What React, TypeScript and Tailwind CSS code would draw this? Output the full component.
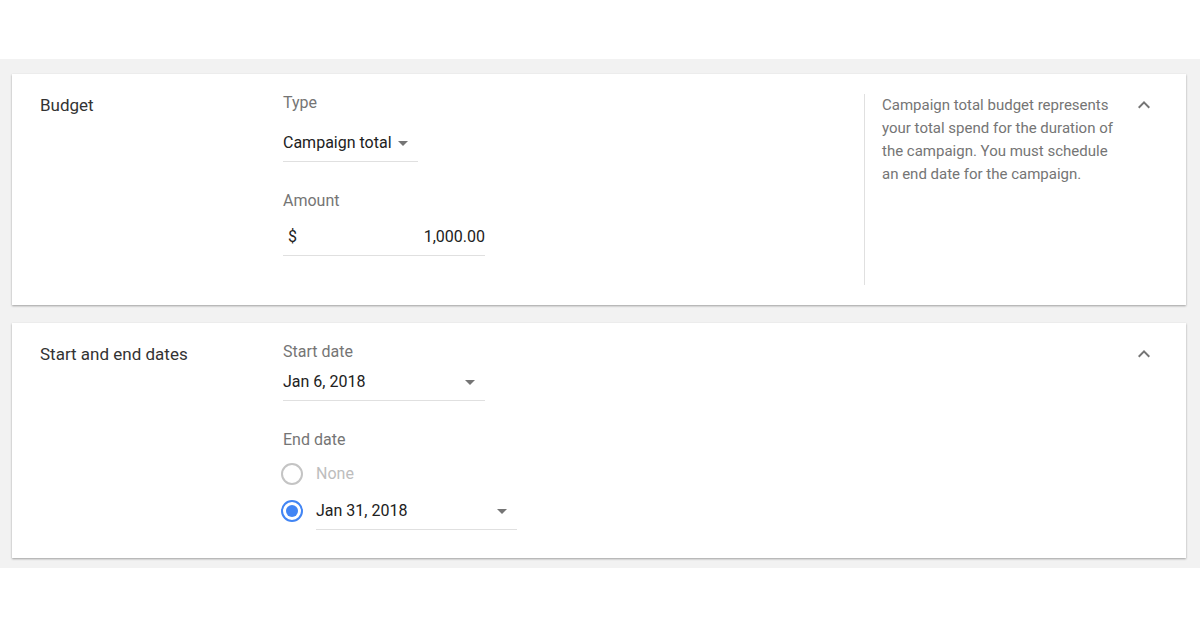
import React from "react";

function ChevronUp() {
  return (
    <svg width="24" height="24" viewBox="0 0 24 24" className="fill-[#757575]">
      <path d="M12 8l-6 6 1.41 1.41L12 10.83l4.59 4.58L18 14z" />
    </svg>
  );
}

function ArrowDrop() {
  return (
    <svg width="24" height="24" viewBox="0 0 24 24" className="fill-[#757575] shrink-0">
      <path d="M7 10l5 5 5-5z" />
    </svg>
  );
}

function Label({ children, className = "" }: { children: React.ReactNode; className?: string }) {
  return <div className={`text-[16px] leading-[18px] text-[#757575] ${className}`}>{children}</div>;
}

function Radio({ checked }: { checked?: boolean }) {
  return checked ? (
    <span className="-ml-[2px] flex h-[22px] w-[22px] items-center justify-center rounded-full border-2 border-[#4285f4]">
      <span className="h-[12px] w-[12px] rounded-full bg-[#4285f4]" />
    </span>
  ) : (
    <span className="-ml-[2px] h-[22px] w-[22px] rounded-full border-2 border-[#c4c4c4]" />
  );
}

export default function App() {
  return (
    <div className="min-h-[628px] bg-white font-['Roboto',sans-serif] text-[#212121]">
      <div className="h-[59px]" />
      <div className="flex flex-col gap-[18px] bg-[#f2f2f2] pb-[10px] pl-3 pr-[14px] pt-[15px]">
        {/* Budget */}
        <section className="flex h-[231px] bg-white py-5 pl-7 shadow-[0_1px_2px_rgba(0,0,0,0.35)]">
          <div className="w-[243px] shrink-0 text-[17px] leading-[22px] text-[#333]">Budget</div>
          <div className="flex-1">
            <Label>Type</Label>
            <div className="mt-3 flex h-[38px] w-[135px] items-center border-b border-[#e0e0e0] text-[16px]">
              <span>Campaign total</span>
              <span className="-ml-[1px]">
                <ArrowDrop />
              </span>
            </div>
            <Label className="mt-[30px]">Amount</Label>
            <div className="mt-2 flex h-[38px] w-[202px] items-center justify-between border-b border-[#e0e0e0] pl-[5px] text-[16px]">
              <span>$</span>
              <span>1,000.00</span>
            </div>
          </div>
          <div className="flex w-[322px] shrink-0 border-l border-[#e0e0e0] pl-[17px] pr-[30px]">
            <p className="w-[234px] text-[15px] leading-[23px] text-[#757575]">
              Campaign total budget represents your total spend for the duration of the campaign. You must schedule an end date for the campaign.
            </p>
            <div className="ml-auto -mt-[1px]">
              <ChevronUp />
            </div>
          </div>
        </section>

        {/* Start and end dates */}
        <section className="flex bg-white pb-7 pl-7 pt-5 shadow-[0_1px_2px_rgba(0,0,0,0.35)]">
          <div className="w-[243px] shrink-0 text-[17px] leading-[22px] text-[#333]">Start and end dates</div>
          <div className="flex-1">
            <Label>Start date</Label>
            <div className="mt-[2px] flex h-[38px] w-[202px] items-center justify-between border-b border-[#e0e0e0] pr-[3px] text-[16px]">
              <span>Jan 6, 2018</span>
              <ArrowDrop />
            </div>
            <Label className="mt-[30px]">End date</Label>
            <div className="mt-[11px] flex h-7 items-center gap-[13px]">
              <Radio />
              <span className="text-[16px] text-[#bdbdbd]">None</span>
            </div>
            <div className="mt-1 flex items-center gap-[13px]">
              <Radio checked />
              <div className="flex h-[38px] w-[201px] items-center justify-between border-b border-[#e0e0e0] pr-[3px] text-[16px]">
                <span>Jan 31, 2018</span>
                <ArrowDrop />
              </div>
            </div>
          </div>
          <div className="flex w-[322px] shrink-0 justify-end pr-[30px]">
            <div className="-mt-[1px]">
              <ChevronUp />
            </div>
          </div>
        </section>
      </div>
    </div>
  );
}
